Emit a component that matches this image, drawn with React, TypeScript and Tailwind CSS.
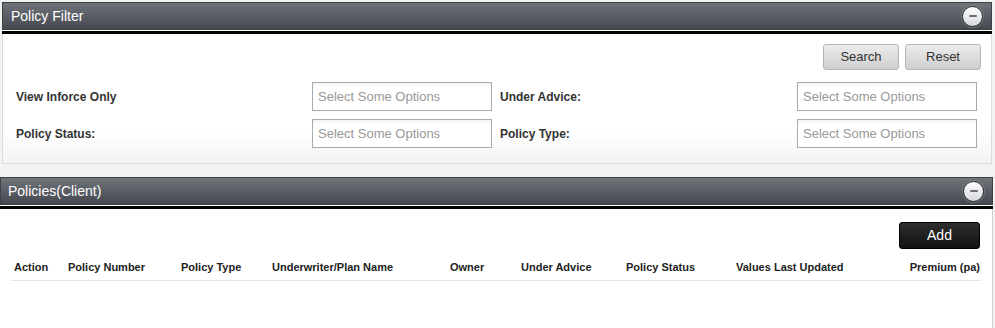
import { Fragment } from "react";

const COLUMNS = [
  { label: "Action", w: "w-[57px] pl-[3px]" },
  { label: "Policy Number", w: "w-[113px]" },
  { label: "Policy Type", w: "w-[91px]" },
  { label: "Underwriter/Plan Name", w: "w-[178px]" },
  { label: "Owner", w: "w-[71px]" },
  { label: "Under Advice", w: "w-[105px]" },
  { label: "Policy Status", w: "w-[110px]" },
  { label: "Values Last Updated", w: "w-[130px]" },
];

function CollapseIcon() {
  return (
    <span className="flex h-[21px] w-[21px] items-center justify-center rounded-full border border-[#2f3236] bg-gradient-to-b from-white to-[#d6d8dc] shadow-[0_0_0_1px_rgba(255,255,255,0.15)]">
      <span className="h-[2px] w-[8px] rounded-sm bg-[#6b6f75]" />
    </span>
  );
}

function PanelHeader({ title, className }: { title: string; className?: string }) {
  return (
    <div className={className}>
      <div className="flex h-[28px] items-center justify-between border border-[#3d4046] bg-gradient-to-b from-[#6f737a] to-[#45494f] pr-[8px]">
        <span className="text-[14px] text-white">{title}</span>
        <CollapseIcon />
      </div>
      <div className="h-[1px] bg-white" />
      <div className="h-[3px] bg-black" />
    </div>
  );
}

function SelectBox() {
  return (
    <div className="flex h-[29px] w-[180px] items-center border border-[#aaa] bg-white px-[5px] text-[13px] text-[#999] shadow-[inset_0_4px_4px_-3px_rgba(0,0,0,0.08)]">
      Select Some Options
    </div>
  );
}

function GrayButton({ label }: { label: string }) {
  return (
    <button
      type="button"
      className="h-[26px] w-[76px] rounded-[3px] border border-[#b5b5b5] bg-gradient-to-b from-[#ececec] to-[#cfcfcf] text-[13px] text-[#333]"
    >
      {label}
    </button>
  );
}

const FILTERS = [
  ["View Inforce Only", "Under Advice:"],
  ["Policy Status:", "Policy Type:"],
];

export default function App() {
  return (
    <div className="h-[328px] w-full overflow-hidden bg-[#f2f2f2] font-['Liberation_Sans',Arial,sans-serif]">
      <div className="ml-[2px] mr-[3px] pt-[2px]">
        <PanelHeader title="Policy Filter" className="[&>div:first-child]:pl-[8px]" />
        <div className="h-[130px] border border-t-0 border-[#dcdcdc] bg-gradient-to-b from-white from-[75%] to-[#f3f3f3] pt-[10px]">
          <div className="flex justify-end gap-[6px] pr-[10px]">
            <GrayButton label="Search" />
            <GrayButton label="Reset" />
          </div>
          <div className="mt-[12px] flex flex-col gap-[8px]">
            {FILTERS.map((row) => (
              <div key={row[0]} className="flex items-center pl-[13px]">
                {row.map((label, i) => (
                  <Fragment key={label}>
                    <span
                      className={`text-[12px] font-bold text-[#333] ${i === 0 ? "w-[296px]" : "ml-[8px] w-[297px]"}`}
                    >
                      {label}
                    </span>
                    <SelectBox />
                  </Fragment>
                ))}
              </div>
            ))}
          </div>
        </div>
      </div>

      <div className="mt-[13px] w-[993px]">
        <PanelHeader title="Policies(Client)" className="[&>div:first-child]:pl-[7px]" />
        <div className="h-[200px] border-r border-[#cfcfcf] bg-white px-[11px] pt-[13px]">
          <div className="flex justify-end pr-[1px]">
            <button
              type="button"
              className="h-[27px] w-[81px] rounded-[3px] border border-black bg-gradient-to-b from-[#2e2e2e] to-[#111] text-[14px] text-white"
            >
              Add
            </button>
          </div>
          <div className="mt-[5px] flex h-[27px] items-center border-b border-[#e3e3e3] text-[11px] font-bold text-[#222]">
            {COLUMNS.map((c) => (
              <span key={c.label} className={c.w}>
                {c.label}
              </span>
            ))}
            <span className="flex-1 pr-[1px] text-right">Premium (pa)</span>
          </div>
        </div>
      </div>
    </div>
  );
}
